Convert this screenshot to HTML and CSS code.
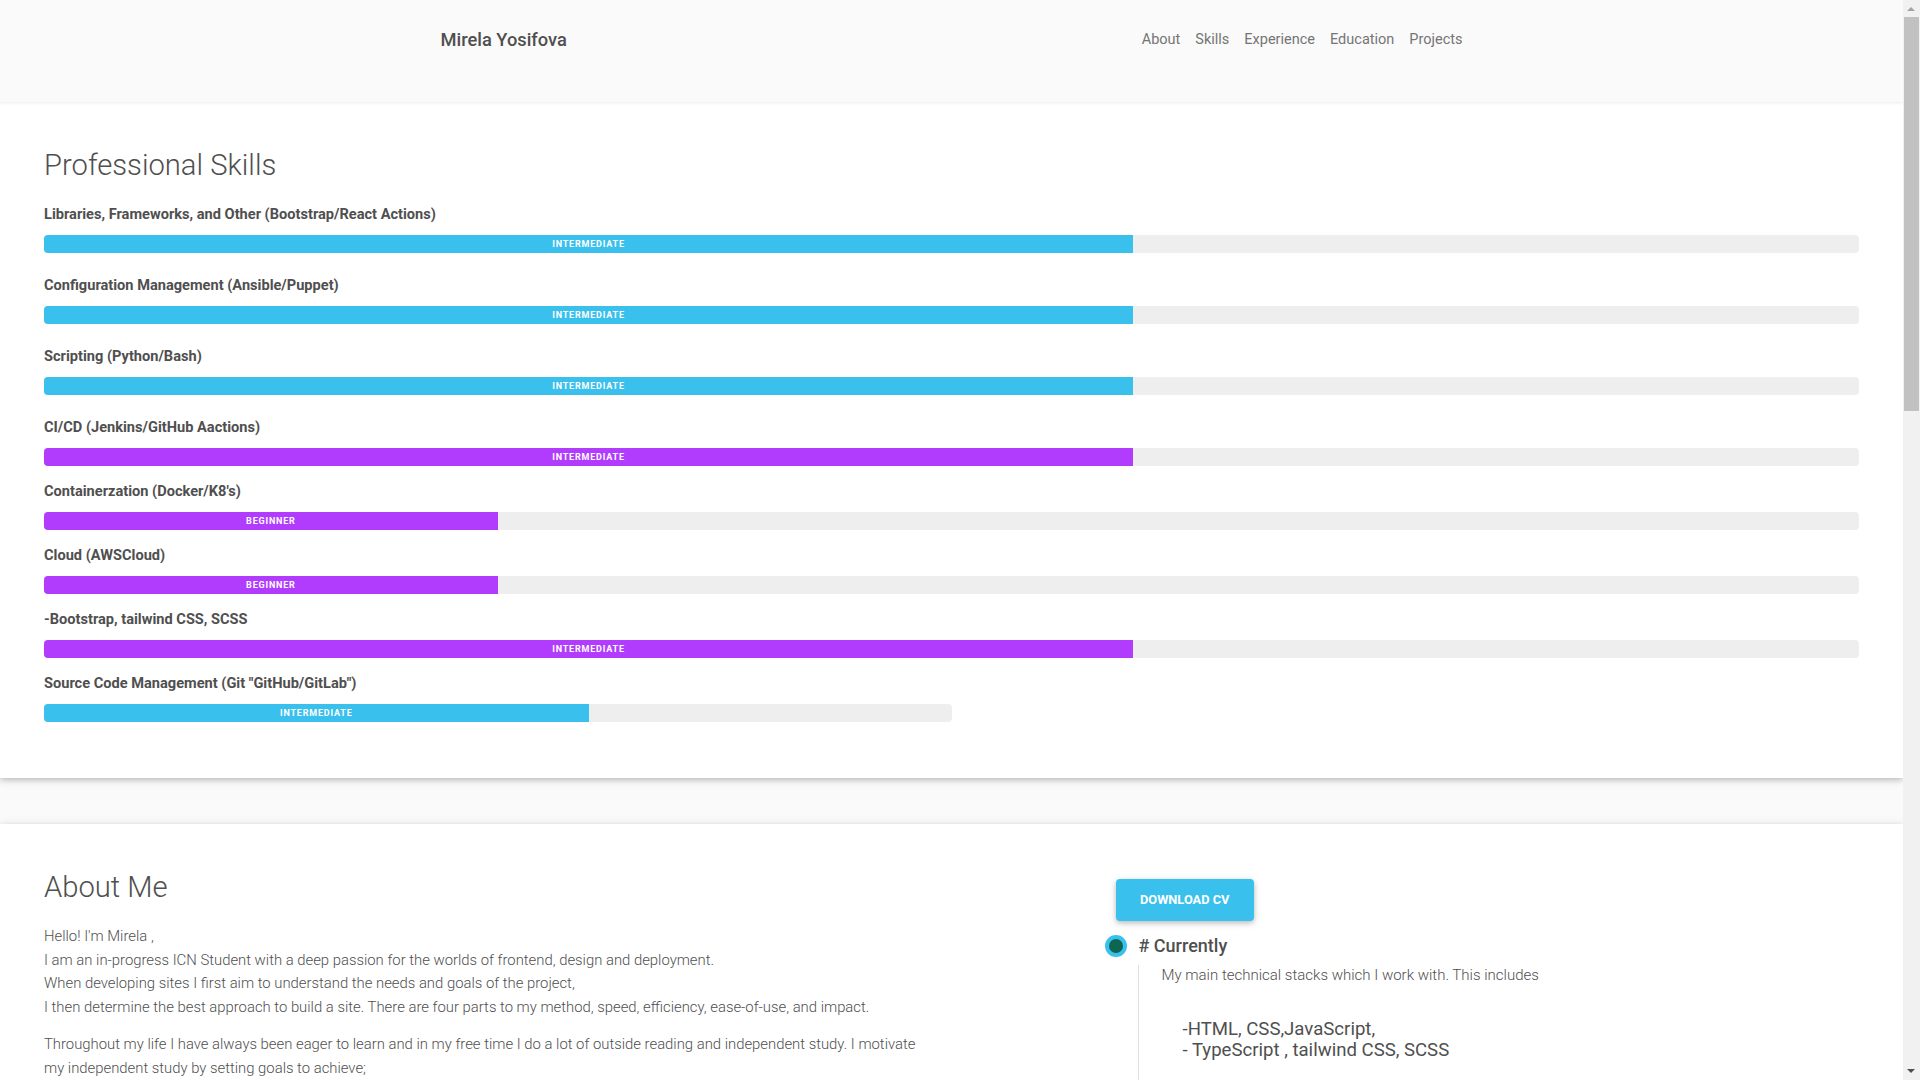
FILE: index.html
```html
<!DOCTYPE html>
<html lang="en">
<head>
<meta charset="utf-8">
<title>Mirela Yosifova</title>
<link rel="stylesheet" href="styles.css">
</head>
<body>
<div class="viewport">
  <header class="topbar">
    <div class="topbar-inner">
      <a class="brand" href="#">Mirela Yosifova</a>
      <nav class="nav">
        <a href="#about">About</a>
        <a href="#skills">Skills</a>
        <a href="#experience">Experience</a>
        <a href="#education">Education</a>
        <a href="#projects">Projects</a>
      </nav>
    </div>
  </header>
  <main class="page">
    <section class="card skills" id="skills">
      <h2 class="section-title">Professional Skills</h2>
      <div class="skill skill--spaced">
        <p class="skill-label">Libraries, Frameworks, and Other (Bootstrap/React Actions)</p>
        <div class="track"><div class="fill fill--info" style="width:60%">Intermediate</div></div>
      </div>
      <div class="skill skill--spaced">
        <p class="skill-label">Configuration Management (Ansible/Puppet)</p>
        <div class="track"><div class="fill fill--info" style="width:60%">Intermediate</div></div>
      </div>
      <div class="skill skill--spaced">
        <p class="skill-label">Scripting (Python/Bash)</p>
        <div class="track"><div class="fill fill--info" style="width:60%">Intermediate</div></div>
      </div>
      <div class="skill">
        <p class="skill-label">CI/CD (Jenkins/GitHub Aactions)</p>
        <div class="track"><div class="fill fill--purple" style="width:60%">Intermediate</div></div>
      </div>
      <div class="skill">
        <p class="skill-label">Containerzation (Docker/K8's)</p>
        <div class="track"><div class="fill fill--purple" style="width:25%">Beginner</div></div>
      </div>
      <div class="skill">
        <p class="skill-label">Cloud (AWSCloud)</p>
        <div class="track"><div class="fill fill--purple" style="width:25%">Beginner</div></div>
      </div>
      <div class="skill">
        <p class="skill-label">-Bootstrap, tailwind CSS, SCSS</p>
        <div class="track"><div class="fill fill--purple" style="width:60%">Intermediate</div></div>
      </div>
      <div class="skill">
        <p class="skill-label">Source Code Management (Git "GitHub/GitLab")</p>
        <div class="track track--half"><div class="fill fill--info" style="width:60%">Intermediate</div></div>
      </div>
    </section>

    <section class="card about" id="about">
      <div class="about-grid">
        <div class="about-text">
          <h2 class="section-title section-title--about">About Me</h2>
          <p class="para">Hello! I'm Mirela ,<br>
          I am an in-progress ICN Student with a deep passion for the worlds of frontend, design and deployment.<br>
          When developing sites I first aim to understand the needs and goals of the project,<br>
          I then determine the best approach to build a site. There are four parts to my method, speed, efficiency, ease-of-use, and impact.</p>
          <p class="para">Throughout my life I have always been eager to learn and in my free time I do a lot of outside reading and independent study. I motivate my independent study by setting goals to achieve;</p>
        </div>
        <div class="about-side">
          <a class="btn-cv" href="#">Download CV</a>
          <div class="timeline">
            <div class="timeline-head">
              <span class="dot"></span>
              <span class="timeline-title"># Currently</span>
            </div>
            <div class="timeline-body">
              <p class="timeline-intro">My main technical stacks which I work with. This includes</p>
              <p class="timeline-stack">-HTML, CSS,JavaScript,<br>- TypeScript , tailwind CSS, SCSS</p>
            </div>
          </div>
        </div>
      </div>
    </section>

    <section class="card" id="experience">
      <h2 class="section-title">Experience</h2>
    </section>
    <section class="card" id="education">
      <h2 class="section-title">Education</h2>
    </section>
    <section class="card" id="projects">
      <h2 class="section-title">Projects</h2>
    </section>
  </main>
</div>

<div class="scrollbar" aria-hidden="true">
  <span class="scroll-arrow scroll-arrow--up"></span>
  <span class="scroll-thumb"></span>
  <span class="scroll-arrow scroll-arrow--down"></span>
</div>
</body>
</html>
```

FILE: styles.css
```css
html, body {
  margin: 0;
  padding: 0;
}

body {
  background: #fafafa;
  font-family: Roboto, "Noto Sans", "Liberation Sans", sans-serif;
  color: #4f4f4f;
}

.viewport {
  margin-right: 17px;
}

.topbar {
  position: relative;
  z-index: 2;
  box-sizing: border-box;
  height: 102px;
  padding-top: 27px;
  background: #fafafa;
  box-shadow: 0 1px 3px rgba(0, 0, 0, 0.08);
}

.topbar-inner {
  width: 1022px;
  margin: 0 auto;
  height: 24px;
  display: flex;
  align-items: center;
  justify-content: space-between;
}

.brand {
  font-size: 18.3px;
  font-weight: 500;
  color: #4f4f4f;
  text-decoration: none;
}

.nav {
  display: flex;
  gap: 15px;
  padding-top: 1px;
}

.nav a {
  font-size: 14.5px;
  color: #757575;
  text-decoration: none;
}

.page {
  min-height: 2765px;
}

.card {
  background: #fff;
  padding: 45px 44px 41px;
  box-shadow: 0 2px 5px 0 rgba(0, 0, 0, 0.16), 0 2px 10px 0 rgba(0, 0, 0, 0.12);
}

.card + .card {
  margin-top: 46px;
}

.section-title {
  margin: 0 0 21px;
  font-size: 29.2px;
  line-height: 36px;
  font-weight: 300;
  color: #4f4f4f;
}

.section-title--about {
  margin-bottom: 20px;
}

.skill {
  margin-bottom: 15px;
}

.skill--spaced {
  margin-bottom: 22px;
}

.skill-label {
  margin: 0 0 10px;
  font-size: 14.6px;
  line-height: 21px;
  font-weight: 700;
  color: #4f4f4f;
}

.track {
  height: 18px;
  background: #eeeeee;
  border-radius: 4px;
  overflow: hidden;
}

.track--half {
  width: 50%;
}

.fill {
  height: 100%;
  display: flex;
  align-items: center;
  justify-content: center;
  color: #fff;
  font-size: 9px;
  font-weight: 700;
  letter-spacing: 0.8px;
  text-transform: uppercase;
}

.fill--info {
  background: #39c0ed;
}

.fill--purple {
  background: #b23cfd;
}

.about-grid {
  display: grid;
  grid-template-columns: 1fr 1fr;
}

.about-text {
  padding-right: 24px;
}

.para {
  margin: 0 0 14px;
  font-size: 14.85px;
  line-height: 23.5px;
  font-weight: 300;
  color: #4f4f4f;
}

.about-side {
  padding-top: 10px;
  padding-left: 153px;
}

.btn-cv {
  display: inline-block;
  margin-left: 11px;
  padding: 12px 24.5px;
  border-radius: 4px;
  background: #39c0ed;
  color: #fff;
  font-size: 12.8px;
  line-height: 18px;
  font-weight: 700;
  text-transform: uppercase;
  text-decoration: none;
  box-shadow: 0 2px 5px 0 rgba(0, 0, 0, 0.2), 0 2px 10px 0 rgba(0, 0, 0, 0.1);
}

.timeline {
  margin-top: 14px;
}

.timeline-head {
  display: flex;
  align-items: center;
  gap: 12px;
  height: 22px;
}

.dot {
  box-sizing: border-box;
  width: 22px;
  height: 22px;
  border-radius: 50%;
  background: #0e6652;
  border: 4px solid #39c0ed;
}

.timeline-title {
  font-size: 18px;
  line-height: 22px;
  font-weight: 500;
  color: #4f4f4f;
}

.timeline-body {
  margin: 8px 0 0 33px;
  padding-left: 23px;
  border-left: 1px solid #e0e0e0;
  padding-bottom: 40px;
}

.timeline-intro {
  margin: 0;
  font-size: 15px;
  line-height: 21px;
  font-weight: 300;
}

.timeline-stack {
  margin: 33px 0 0;
  padding-left: 21px;
  font-size: 18.6px;
  line-height: 21px;
  font-weight: 400;
}

/* fake browser scrollbar overlaying the right edge */
.scrollbar {
  position: fixed;
  top: 0;
  right: 0;
  width: 17px;
  height: 100vh;
  background: #f1f1f1;
  z-index: 10;
}

.scroll-thumb {
  position: absolute;
  left: 1px;
  right: 1px;
  top: 17px;
  height: 394px;
  background: #c1c1c1;
}

.scroll-arrow {
  position: absolute;
  left: 4px;
  width: 0;
  height: 0;
  border-left: 4.5px solid transparent;
  border-right: 4.5px solid transparent;
}

.scroll-arrow--up {
  top: 7px;
  border-bottom: 4px solid #a3a3a3;
}

.scroll-arrow--down {
  bottom: 7px;
  border-top: 4px solid #505050;
}
```
